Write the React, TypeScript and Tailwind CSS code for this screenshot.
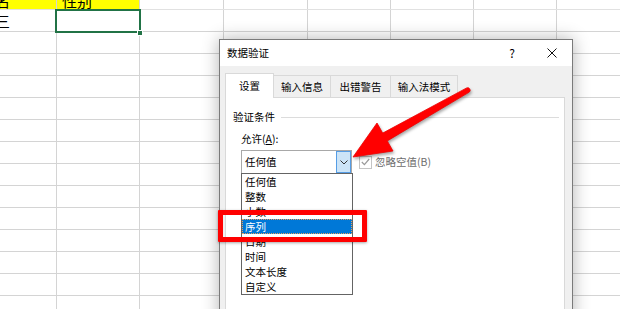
import React from "react"

// column widths of the sheet behind the dialog
const colWidths = ["w-[57px]", "w-[83px]", "w-[84px]", "w-[84px]", "w-[83px]", "w-[83px]", "w-[83px]", "w-[83px]"]

const options = ["任何值", "整数", "小数", "序列", "日期", "时间", "文本长度", "自定义"]

const tabs = [
  { name: "输入信息", w: "w-[57px]" },
  { name: "出错警告", w: "w-[60px]" },
  { name: "输入法模式", w: "w-[67px]" },
]

function Sheet() {
  return (
    <div className="flex flex-col">
      {/* header row, cut off at the top */}
      <div className="flex h-[10px] border-b border-[#e1e1e1]">
        {colWidths.map((w, i) => (
          <div
            key={i}
            className={`${w} shrink-0 h-full overflow-hidden border-r border-[#d4d4d4] flex items-end ${i < 2 ? "bg-[#ffff00]" : ""}`}
          >
            {i === 0 && <span className="text-[15px] leading-none ml-[-20px] pb-[1px]">姓名</span>}
            {i === 1 && <span className="text-[15px] leading-none ml-[5px] pb-[1px]">性别</span>}
          </div>
        ))}
      </div>
      {Array.from({ length: 14 }).map((_, r) => (
        <div key={r} className="flex h-[22px] border-b border-[#d4d4d4]">
          {colWidths.map((w, i) => (
            <div key={i} className={`${w} shrink-0 h-full overflow-hidden border-r border-[#d4d4d4] flex items-center`}>
              {r === 0 && i === 0 && <span className="text-[15px] leading-none ml-[-20px] whitespace-nowrap">张三</span>}
            </div>
          ))}
        </div>
      ))}
    </div>
  )
}

function Dialog() {
  return (
    <div className="absolute left-[219px] top-[39px] w-[354px] h-[290px] border border-[#7a7a7a] bg-[#f0f0f0] shadow-[0_0_16px_rgba(0,0,0,0.3)] flex flex-col text-[10.5px]">
      {/* title bar */}
      <div className="h-[26px] bg-white flex items-center pl-[7px]">
        <span className="flex-1">数据验证</span>
        <div className="w-[40px] flex justify-center text-[12px]">?</div>
        <div className="w-[40px] flex justify-center">
          <svg width="10" height="10" viewBox="0 0 10 10">
            <path d="M0.5 0.5 L9.5 9.5 M9.5 0.5 L0.5 9.5" stroke="#111" strokeWidth="1" />
          </svg>
        </div>
      </div>

      <div className="pt-[7px] pl-[5px] flex flex-col flex-1">
        {/* tabs */}
        <div className="flex items-end">
          <div className="relative z-10 w-[49px] h-[25px] -mb-px bg-white border border-b-0 border-[#d9d9d9] flex items-center justify-center">
            设置
          </div>
          {tabs.map((t) => (
            <div
              key={t.name}
              className={`${t.w} h-[22px] border border-l-0 border-b-0 border-[#d9d9d9] bg-[#f0f0f0] flex items-center justify-center`}
            >
              {t.name}
            </div>
          ))}
        </div>

        {/* tab panel */}
        <div className="w-[340px] flex-1 bg-white border border-[#d9d9d9] pt-[12px] pl-[7px] pr-[5px]">
          <div className="flex items-center gap-[6px] h-[14px]">
            <span>验证条件</span>
            <div className="flex-1 border-t border-[#dcdcdc]" />
          </div>

          <div className="pl-[8px] mt-[8px]">
            <div className="h-[14px] leading-[14px]">
              允许(<span className="underline">A</span>):
            </div>
            <div className="flex items-center mt-[4px]">
              <div className="relative w-[111px] h-[24px] border border-[#a8a8a8] bg-white flex items-center">
                <span className="flex-1 pl-[3px]">任何值</span>
                <div className="w-[15px] h-full bg-[#cce4f7] border border-[#569de5] flex items-center justify-center">
                  <svg width="8" height="5" viewBox="0 0 8 5">
                    <path d="M0.5 0.5 L4 4 L7.5 0.5" fill="none" stroke="#333" strokeWidth="1" />
                  </svg>
                </div>

                {/* open drop-down list */}
                <div className="absolute top-full left-[-1px] w-[112px] border border-[#646464] bg-white z-20">
                  {options.map((o) => (
                    <div
                      key={o}
                      className={`h-[15px] leading-[15px] pl-[3px] ${
                        o === "序列" ? "bg-[#0078d7] text-white outline outline-1 outline-dotted outline-offset-[-1px] outline-[#e8a060]" : ""
                      }`}
                    >
                      {o}
                    </div>
                  ))}
                </div>
              </div>

              <div className="ml-[7px] w-[13px] h-[13px] border border-[#c4c4c4] bg-white flex items-center justify-center">
                <svg width="9" height="8" viewBox="0 0 9 8">
                  <path d="M0.8 4 L3.4 6.6 L8.2 1" fill="none" stroke="#9a9a9a" strokeWidth="1.2" />
                </svg>
              </div>
              <span className="ml-[3px] text-[#6d6d6d]">忽略空值(B)</span>
            </div>
          </div>
        </div>
      </div>
    </div>
  )
}

export default function App() {
  return (
    <div className="relative w-[620px] h-[309px] overflow-hidden bg-white text-black font-['Noto_Sans_CJK_SC','Noto_Sans',sans-serif]">
      <Sheet />

      {/* active cell */}
      <div className="absolute left-[55px] top-[9px] w-[86px] h-[24px] border-2 border-[#217346]" />
      <div className="absolute left-[137px] top-[30px] w-[6px] h-[6px] bg-[#217346] border border-white" />

      <Dialog />

      {/* red annotation box */}
      <div className="absolute left-[218px] top-[210px] w-[149px] h-[32px] border-[5px] border-[#ff0000] rounded-[1px] shadow-[0_1px_3px_rgba(0,0,0,0.35)] z-30" />

      {/* red annotation arrow */}
      <svg
        className="absolute inset-0 z-40 pointer-events-none drop-shadow-[1px_2px_1.5px_rgba(0,0,0,0.35)]"
        width="620"
        height="309"
        viewBox="0 0 620 309"
      >
        <path
          d="M353 157 L377 123 L382.7 133.1 L466.7 87.9 A2.5 2.5 0 0 1 469.3 92.1 L387.3 140.9 L393 151 Z"
          fill="#ff0000"
          stroke="#ee0000"
          strokeWidth="0.8"
          strokeLinejoin="round"
        />
      </svg>
    </div>
  )
}
